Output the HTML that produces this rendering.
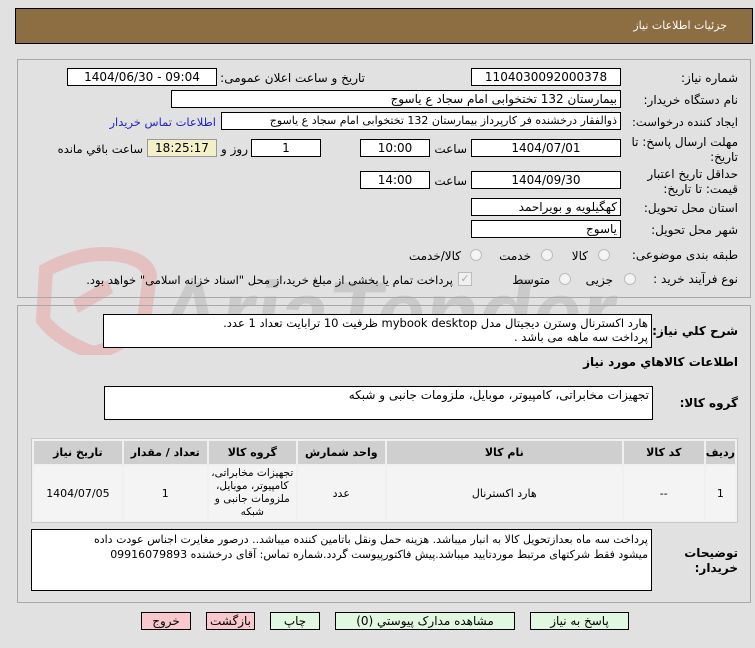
<!DOCTYPE html>
<html><head><meta charset="utf-8">
<style>
*{margin:0;padding:0;box-sizing:border-box}
body{width:755px;height:648px;background:#e1e1e1;font-family:"DejaVu Sans","Liberation Sans",sans-serif;font-size:12px;color:#000;position:relative;overflow:hidden}
.a{position:absolute;white-space:nowrap}
.box{position:absolute;background:#fff;border:1px solid #000;text-align:center;line-height:16px;font-size:12px;overflow:hidden;white-space:nowrap}
.r{direction:rtl;text-align:right;padding-right:3px}
.lbl{position:absolute;direction:rtl;text-align:right;white-space:nowrap;font-size:12px}
.rad{position:absolute;width:12px;height:12px;border-radius:50%;border:1px solid #bbb;background:#f4f4f4}
.btn{position:absolute;height:18px;border:1px solid #000;text-align:center;line-height:16px;font-size:12px}
table{border-collapse:separate;border-spacing:2px}
td,th{text-align:center;font-size:11px}
th{background:#cfcfcf;height:23px;font-weight:bold}
td{background:#f4f4f4;height:54px}
</style></head><body>
<svg class="a" style="left:18px;top:245px" width="600" height="110">
<path d="M28 25 Q65 5 100 10 Q128 14 132 30 L126 75 Q110 100 75 108 Q40 95 25 75 Z" fill="none" stroke="#e4c0c0" stroke-width="14"/>
<path d="M55 55 L90 35 L95 48 L60 68 Z" fill="#e4c0c0"/>
<text x="150" y="98" font-family="Liberation Sans" font-weight="bold" font-size="88" fill="#cacaca" transform="skewX(-8)">AriaTender.net</text>
</svg>

<div class="a" style="left:15px;top:8px;width:738px;height:36px;background:#8d6d42;border:1px solid #000"></div>
<div class="lbl" style="right:28px;top:19px;color:#fff;font-size:11px">جزئیات اطلاعات نیاز</div>

<div class="a" style="left:17px;top:59px;width:734px;height:239px;border:1px solid #a8a8a8"></div>
<div class="a" style="left:17px;top:305px;width:734px;height:298px;border:1px solid #a8a8a8"></div>

<div class="lbl" style="right:17px;top:71px">شماره نیاز:</div>
<div class="box" style="left:471px;top:68px;width:150px;height:18px">1104030092000378</div>
<div class="lbl" style="right:390px;top:71px">تاریخ و ساعت اعلان عمومی:</div>
<div class="box" style="left:67px;top:68px;width:150px;height:18px">1404/06/30 - 09:04</div>

<div class="lbl" style="right:17px;top:93px">نام دستگاه خریدار:</div>
<div class="box r" style="left:171px;top:90px;width:450px;height:18px">بیمارستان 132 تختخوابی امام سجاد  ع  یاسوج</div>

<div class="lbl" style="right:17px;top:115px;font-size:11.5px">ایجاد کننده درخواست:</div>
<div class="box r" style="left:221px;top:112px;width:400px;height:18px;font-size:11px">ذوالفقار درخشنده فر کارپرداز بیمارستان 132 تختخوابی امام سجاد  ع  یاسوج</div>
<div class="lbl" style="right:539px;top:115px;color:#2222cc;font-size:11.5px">اطلاعات تماس خریدار</div>

<div class="lbl" style="right:17px;top:135px;line-height:15px">مهلت ارسال پاسخ: تا<br>تاریخ:</div>
<div class="box" style="left:471px;top:139px;width:150px;height:18px">1404/07/01</div>
<div class="lbl" style="right:288px;top:142px">ساعت</div>
<div class="box" style="left:360px;top:139px;width:70px;height:18px">10:00</div>
<div class="box" style="left:251px;top:139px;width:70px;height:18px">1</div>
<div class="lbl" style="right:507px;top:142px">روز و</div>
<div class="box" style="left:147px;top:139px;width:70px;height:18px;background:#f3f0c8;border-color:#999">18:25:17</div>
<div class="lbl" style="right:612px;top:142px;font-size:11.5px">ساعت باقي مانده</div>

<div class="lbl" style="right:17px;top:167px;line-height:15px">حداقل تاریخ اعتبار<br>قیمت: تا تاریخ:</div>
<div class="box" style="left:471px;top:171px;width:150px;height:18px">1404/09/30</div>
<div class="lbl" style="right:288px;top:174px">ساعت</div>
<div class="box" style="left:360px;top:171px;width:70px;height:18px">14:00</div>

<div class="lbl" style="right:17px;top:201px">استان محل تحویل:</div>
<div class="box r" style="left:471px;top:198px;width:150px;height:18px">کهگیلویه و بویراحمد</div>
<div class="lbl" style="right:17px;top:223px">شهر محل تحویل:</div>
<div class="box r" style="left:471px;top:220px;width:150px;height:18px">یاسوج</div>

<div class="lbl" style="right:17px;top:248px">طبقه بندی موضوعی:</div>
<div class="rad" style="left:598px;top:249px"></div><div class="lbl" style="right:167px;top:249px">کالا</div>
<div class="rad" style="left:541px;top:249px"></div><div class="lbl" style="right:224px;top:249px">خدمت</div>
<div class="rad" style="left:470px;top:249px"></div><div class="lbl" style="right:294px;top:249px">کالا/خدمت</div>

<div class="lbl" style="right:17px;top:272px">نوع فرآیند خرید :</div>
<div class="rad" style="left:624px;top:273px"></div><div class="lbl" style="right:142px;top:273px">جزیی</div>
<div class="rad" style="left:559px;top:273px"></div><div class="lbl" style="right:205px;top:273px">متوسط</div>
<div class="a" style="left:458px;top:272px;width:14px;height:14px;border:1px solid #bbb;background:#f0f0f0;color:#aaa;font-size:11px;text-align:center;line-height:12px">✓</div>
<div class="lbl" style="right:302px;top:273px;font-size:11.5px">پرداخت تمام یا بخشی از مبلغ خرید،از محل "اسناد خزانه اسلامی" خواهد بود.</div>

<div class="lbl" style="right:17px;top:324px;font-weight:bold">شرح کلي نیاز:</div>
<div class="box r" style="left:103px;top:314px;width:549px;height:34px;text-align:right;line-height:14px;padding-top:1px;font-size:11.5px">هارد اکسترنال وسترن دیجیتال مدل mybook desktop ظرفیت 10 ترابایت تعداد 1 عدد.<br>پرداخت سه ماهه می باشد .</div>
<div class="lbl" style="right:17px;top:355px;font-weight:bold">اطلاعات کالاهاي مورد نیاز</div>
<div class="lbl" style="right:17px;top:396px;font-weight:bold">گروه کالا:</div>
<div class="box r" style="left:104px;top:386px;width:549px;height:34px;text-align:right;line-height:16px;font-size:12px">تجهیزات مخابراتی، کامپیوتر، موبایل، ملزومات جانبی و شبکه</div>

<div class="a" style="left:31px;top:438px;width:707px;height:85px;border:1px solid #c8c8c8;background:#f0f0f0">
<table style="width:705px;direction:rtl">
<tr><th style="width:27px">ردیف</th><th style="width:80px">کد کالا</th><th style="width:235px">نام کالا</th><th style="width:87px">واحد شمارش</th><th style="width:87px">گروه کالا</th><th style="width:83px">تعداد / مقدار</th><th>تاریخ نیاز</th></tr>
<tr><td>1</td><td>--</td><td>هارد اکسترنال</td><td>عدد</td><td style="line-height:13px;font-size:10.5px">تجهیزات مخابراتی،<br>کامپیوتر، موبایل،<br>ملزومات جانبی و<br>شبکه</td><td>1</td><td>1404/07/05</td></tr>
</table></div>

<div class="lbl" style="right:17px;top:546px;font-weight:bold;line-height:15px">توضیحات<br>خریدار:</div>
<div class="box r" style="left:31px;top:529px;width:621px;height:62px;text-align:right;line-height:15px;padding-top:2px;font-size:11px">پرداخت سه ماه بعدازتحویل کالا به انبار میباشد. هزینه حمل ونقل باتامین کننده میباشد.. درصور مغایرت اجناس عودت داده<br>میشود فقط شرکتهای مرتبط موردتایید میباشد.پیش فاکتورپیوست گردد.شماره تماس: آقای درخشنده 09916079893</div>

<div class="btn" style="left:141px;width:50px;top:612px;background:#f8c8cc">خروج</div>
<div class="btn" style="left:206px;width:49px;top:612px;background:#f8c8cc">بازگشت</div>
<div class="btn" style="left:270px;width:50px;top:612px;background:#e0f8e0">چاپ</div>
<div class="btn" style="left:335px;width:180px;top:612px;background:#e0f8e0">مشاهده مدارک پیوستي (0)</div>
<div class="btn" style="left:530px;width:99px;top:612px;background:#e0f8e0">پاسخ به نیاز</div>
</body></html>
